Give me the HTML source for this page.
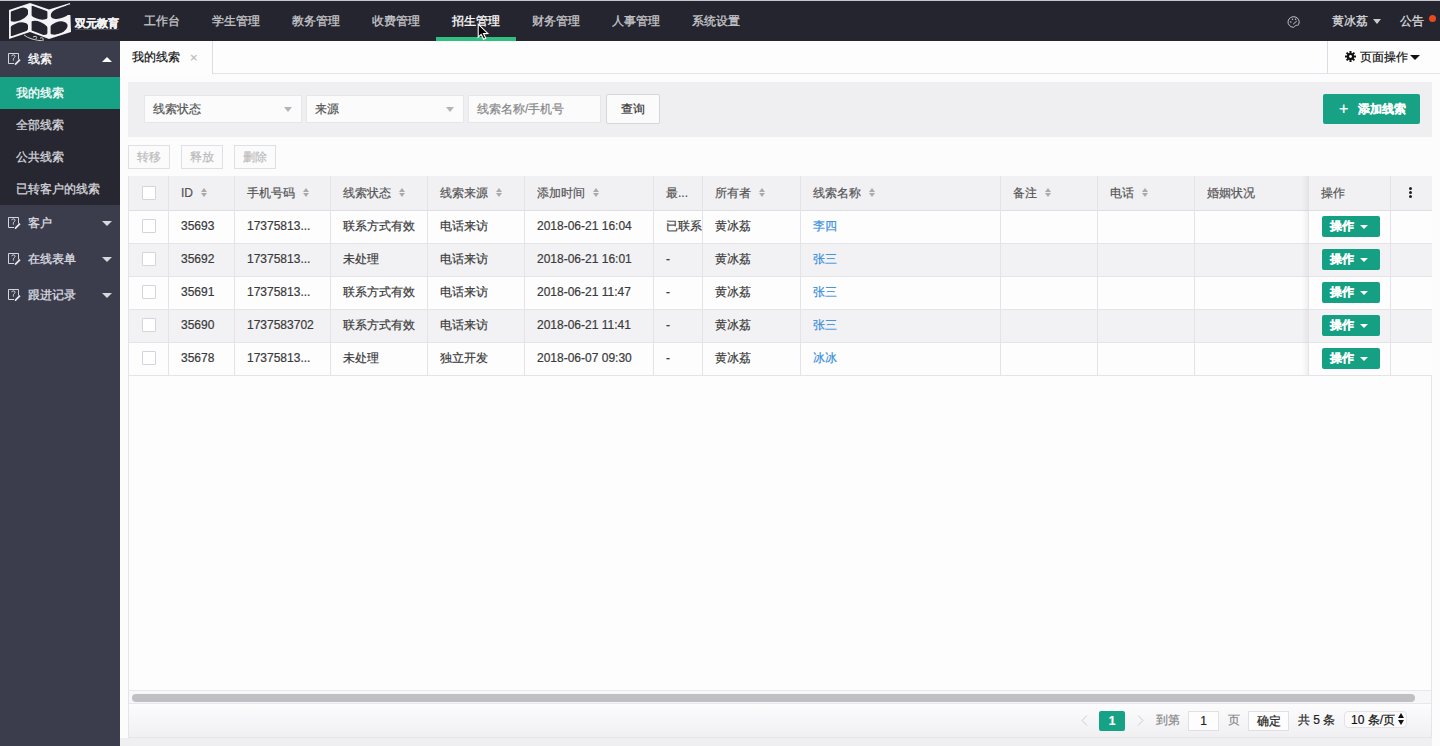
<!DOCTYPE html>
<html><head><meta charset="utf-8">
<style>
*{box-sizing:border-box;margin:0;padding:0}
html,body{width:1440px;height:746px;overflow:hidden;background:#fcfcfd;font-family:"Liberation Sans",sans-serif;font-size:12px;color:#333;-webkit-text-stroke:0.2px currentColor}
#top{position:absolute;left:0;top:0;width:1440px;height:41px;background:#24252e;border-top:1px solid #c6c6cc}
.nav{position:absolute;top:0;height:40px;line-height:40px;color:#c8c8cc;font-size:12px;white-space:nowrap;-webkit-text-stroke:0.3px currentColor}
#side{position:absolute;left:0;top:41px;width:120px;height:705px;background:#3b3d4c}
.sh{position:absolute;left:0;width:120px;height:36px;line-height:36px;color:#fff;font-size:12px;padding-left:28px;-webkit-text-stroke:0.3px currentColor}
.sh .ic{position:absolute;left:7px;top:11px}
.sh .car{position:absolute;left:102px;top:16px;width:0;height:0;border-left:5px solid transparent;border-right:5px solid transparent;border-top:5px solid #d8d8de}
.sh .car.up{border-top:0;border-bottom:5px solid #fff}
.si{position:absolute;left:0;width:120px;height:32px;line-height:32px;color:#d5d5da;font-size:12px;padding-left:16px;background:#262731;-webkit-text-stroke:0.3px currentColor}
#tabs{position:absolute;left:120px;top:41px;width:1320px;height:33px;background:#fdfdfe;border-bottom:1px solid #e2e2e8}
.tab{position:absolute;left:0;top:0;width:93px;height:33px;background:#fdfdfe;border-right:1px solid #dcdce2;line-height:33px;padding-left:12px;color:#111}
.tab .x{position:absolute;left:70px;top:0;color:#bbb;font-size:13px}
.pgop{position:absolute;left:1207px;top:0;width:113px;height:32px;border-left:1px solid #dcdce2;line-height:32px;color:#111}
#filter{position:absolute;left:128px;top:82px;width:1304px;height:55px;background:#efeff2}
.sel{position:absolute;top:13px;height:28px;background:#fbfbfc;border:1px solid #e6e6ea;line-height:26px;padding-left:8px;color:#555}
.sel .c{position:absolute;right:9px;top:11px;border-left:4.5px solid transparent;border-right:4.5px solid transparent;border-top:5px solid #b4b4b8}
.btn{position:absolute;background:#fbfbfc;border:1px solid #d6d6dc;text-align:center;color:#333;border-radius:2px}
.addb{position:absolute;left:1195px;top:12px;width:97px;height:30px;background:#17a286;border-radius:2px;color:#fff;font-weight:bold;line-height:30px;font-size:12px}
.abtn{position:absolute;top:145px;height:24px;width:42px;border:1px solid #e0e0e4;color:#bbb;line-height:22px;text-align:center;background:#fbfbfc}
#tbox{position:absolute;left:128px;top:176px;width:1304px;height:562px;border:1px solid #e4e4ea;background:#fdfdfe}
.thead{position:absolute;left:128px;width:1304px;background:#f1f1f4;border-bottom:1px solid #dedee4}
.tr{position:absolute;left:128px;width:1304px;border-bottom:1px solid #e3e3e8}
.th,.td{position:absolute;border-left:1px solid #e3e3e8;padding-left:12px;white-space:nowrap;overflow:hidden}
.th{line-height:35px;color:#555}
.td{line-height:30px;color:#3a3a3a}
.cb{position:absolute;left:13px;width:14px;height:14px;border:1px solid #d4d4da;background:#fff;border-radius:1px}
.sort{display:inline-block;position:relative;width:8px;height:10px;margin-left:8px;vertical-align:-1px}
.sort b{position:absolute;left:0;border-left:3.5px solid transparent;border-right:3.5px solid transparent}
.sort .u{top:0;border-bottom:4px solid #aaa}
.sort .d{top:5px;border-top:4px solid #aaa}
.lk{color:#3b8fdc}
.opb{position:absolute;left:13px;top:5px;width:58px;height:21px;background:#15a084;border-radius:2px;color:#fff;font-weight:bold;line-height:21px;padding-left:8px}
.opb b{position:absolute;left:38px;top:9px;border-left:4px solid transparent;border-right:4px solid transparent;border-top:4px solid #fff}
.dots{position:absolute;left:18px;top:11px;width:3px}
.dots i{display:block;width:3px;height:3px;background:#222;border-radius:50%;margin-bottom:1px}
#scroll{position:absolute;left:129px;top:690px;width:1302px;height:14px;background:#f7f7f9;border-top:1px solid #e8e8ec;border-bottom:1px solid #e8e8ec}
#thumb{position:absolute;left:3px;top:3px;width:1283px;height:8px;background:#c0c0c4;border-radius:4px}
#pag{position:absolute;left:129px;top:704px;width:1302px;height:33px;background:linear-gradient(#fcfcfd,#f0f0f3)}
#bot{position:absolute;left:120px;top:738px;width:1312px;height:8px;background:#efeff2}
</style></head><body>
<div id="top">
  <svg style="position:absolute;left:0;top:-1px" width="130" height="42" viewBox="0 0 130 42">
    <defs>
      <clipPath id="pl"><polygon points="10.8,11.6 28,5.6 28,30.6 10.8,36.6"/></clipPath>
      <clipPath id="pm"><polygon points="31.6,5.6 47.4,11.2 47.4,36.6 31.6,30.6"/></clipPath>
      <clipPath id="pr"><polygon points="50.6,11.2 69,4.6 72,4.6 72,15 69,15.8 69,30.6 50.6,36.6"/></clipPath>
    </defs>
    <polygon points="9,10 30,3 49,9.5 70,3 71,32 49,39 30,32 9,39" fill="#f4f4f6"/>
    <g fill="#24252e">
      <g clip-path="url(#pl)"><ellipse cx="18" cy="14.5" rx="11" ry="6.3" transform="rotate(-22 18 14.5)"/><ellipse cx="18" cy="29.5" rx="11" ry="6.3" transform="rotate(-22 18 29.5)"/></g>
      <g clip-path="url(#pm)"><ellipse cx="38.5" cy="12.5" rx="11" ry="6.3" transform="rotate(22 38.5 12.5)"/><ellipse cx="38.5" cy="28" rx="11" ry="6.3" transform="rotate(22 38.5 28)"/></g>
      <g clip-path="url(#pr)"><ellipse cx="61" cy="12.5" rx="11" ry="5.5" transform="rotate(-22 61 12.5)"/><ellipse cx="58" cy="28" rx="10" ry="6" transform="rotate(-22 58 28)"/><rect x="66" y="4" width="6" height="11"/></g>
    </g>
    <path d="M24 35 Q30 40 44 41 M33 37 Q38 35 36 39 M40 38 Q44 37 43 40" stroke="#ddd" stroke-width="0.9" fill="none"/>
    <text x="75" y="27" font-size="11" font-weight="bold" fill="#f2f2f2" stroke="#f2f2f2" stroke-width="0.35" font-family="Liberation Sans">双元教育</text>
    <rect x="75" y="29" width="44" height="1" fill="#4a4b55"/>
  </svg>
  <div class="nav" style="left:144px">工作台</div>
  <div class="nav" style="left:212px">学生管理</div>
  <div class="nav" style="left:292px">教务管理</div>
  <div class="nav" style="left:372px">收费管理</div>
  <div class="nav" style="left:452px;color:#fff">招生管理</div>
  <div style="position:absolute;left:436px;top:36px;width:80px;height:4px;background:#2fbf7f"></div>
  <div class="nav" style="left:532px">财务管理</div>
  <div class="nav" style="left:612px">人事管理</div>
  <div class="nav" style="left:692px">系统设置</div>
  <svg style="position:absolute;left:1287px;top:15px" width="14" height="12" viewBox="0 0 14 12"><path d="M11.8 8 A5.6 5.3 0 1 0 6.5 11.3 C8 11.3 7.6 9.3 9.3 9.3 C10.8 9.3 11.8 9.2 11.8 8 Z" stroke="#c4c4c8" stroke-width="1" fill="none"/><circle cx="3.8" cy="6" r="0.8" fill="#c4c4c8"/><circle cx="5.5" cy="3.3" r="0.8" fill="#c4c4c8"/><circle cx="8.6" cy="3.3" r="0.8" fill="#c4c4c8"/><path d="M6.2 8.2 L9.8 5" stroke="#c4c4c8" stroke-width="1"/></svg>
  <div class="nav" style="left:1332px;color:#d8d8dc">黄冰荔</div>
  <div style="position:absolute;left:1373px;top:18px;border-left:4.5px solid transparent;border-right:4.5px solid transparent;border-top:5px solid #ccc"></div>
  <div class="nav" style="left:1400px;color:#d8d8dc">公告</div>
  <div style="position:absolute;left:1429px;top:14px;width:7px;height:7px;border-radius:50%;background:#e84a1f"></div>
<svg style="position:absolute;left:477px;top:22px" width="14" height="18" viewBox="0 0 14 18"><path d="M1.2 1.2 L1.2 14.2 L4.2 11.4 L6.6 16.2 L8.8 15.2 L6.5 10.6 L10.8 10.4 Z" fill="#000" stroke="#fff" stroke-width="1.1" stroke-linejoin="miter"/></svg>
</div>
<div id="side">
  <div class="sh" style="top:0"><svg class="ic" width="15" height="14" viewBox="0 0 15 14"><path d="M1.5 1.5 H11.5 V7.5 M1.5 1.5 V11.5 H7" stroke="#d4d4dc" stroke-width="1" fill="none"/><path d="M4.6 4.2 Q4.9 2.9 6.4 2.9 Q8 2.9 8 4.3 Q8 5.3 6.9 5.9 Q6.4 6.3 6.4 7.2 V8.6" stroke="#d4d4dc" stroke-width="1" fill="none"/><path d="M8 12.6 L13 7.6" stroke="#e8e8ee" stroke-width="1.8"/></svg>线索<span class="car up"></span></div>
  <div class="si" style="top:36px;background:#17a286;color:#fff">我的线索</div>
  <div class="si" style="top:68px">全部线索</div>
  <div class="si" style="top:100px">公共线索</div>
  <div class="si" style="top:132px">已转客户的线索</div>
  <div class="sh" style="top:164px;color:#dcdce0"><svg class="ic" width="15" height="14" viewBox="0 0 15 14"><path d="M1.5 1.5 H11.5 V7.5 M1.5 1.5 V11.5 H7" stroke="#d4d4dc" stroke-width="1" fill="none"/><path d="M4.6 4.2 Q4.9 2.9 6.4 2.9 Q8 2.9 8 4.3 Q8 5.3 6.9 5.9 Q6.4 6.3 6.4 7.2 V8.6" stroke="#d4d4dc" stroke-width="1" fill="none"/><path d="M8 12.6 L13 7.6" stroke="#e8e8ee" stroke-width="1.8"/></svg>客户<span class="car"></span></div>
  <div class="sh" style="top:200px;color:#dcdce0"><svg class="ic" width="15" height="14" viewBox="0 0 15 14"><path d="M1.5 1.5 H11.5 V7.5 M1.5 1.5 V11.5 H7" stroke="#d4d4dc" stroke-width="1" fill="none"/><path d="M4.6 4.2 Q4.9 2.9 6.4 2.9 Q8 2.9 8 4.3 Q8 5.3 6.9 5.9 Q6.4 6.3 6.4 7.2 V8.6" stroke="#d4d4dc" stroke-width="1" fill="none"/><path d="M8 12.6 L13 7.6" stroke="#e8e8ee" stroke-width="1.8"/></svg>在线表单<span class="car"></span></div>
  <div class="sh" style="top:236px;color:#dcdce0"><svg class="ic" width="15" height="14" viewBox="0 0 15 14"><path d="M1.5 1.5 H11.5 V7.5 M1.5 1.5 V11.5 H7" stroke="#d4d4dc" stroke-width="1" fill="none"/><path d="M4.6 4.2 Q4.9 2.9 6.4 2.9 Q8 2.9 8 4.3 Q8 5.3 6.9 5.9 Q6.4 6.3 6.4 7.2 V8.6" stroke="#d4d4dc" stroke-width="1" fill="none"/><path d="M8 12.6 L13 7.6" stroke="#e8e8ee" stroke-width="1.8"/></svg>跟进记录<span class="car"></span></div>
</div>
<div id="tabs">
  <div class="tab">我的线索<span class="x">×</span></div>
  <div class="pgop"><svg style="position:absolute;left:17px;top:10px" width="11" height="11" viewBox="0 0 11 11"><circle cx="5.5" cy="5.5" r="3.6" fill="#111"/><g fill="#111"><rect x="4.5" y="0" width="2" height="11"/><rect x="0" y="4.5" width="11" height="2"/><rect x="4.5" y="0" width="2" height="11" transform="rotate(45 5.5 5.5)"/><rect x="4.5" y="0" width="2" height="11" transform="rotate(-45 5.5 5.5)"/></g><circle cx="5.5" cy="5.5" r="1.4" fill="#fff"/></svg><span style="position:absolute;left:32px">页面操作</span><span style="position:absolute;left:82px;top:14px;border-left:5px solid transparent;border-right:5px solid transparent;border-top:5px solid #111"></span></div>
</div>
<div id="filter">
  <div class="sel" style="left:16px;width:158px">线索状态<span class="c"></span></div>
  <div class="sel" style="left:178px;width:158px">来源<span class="c"></span></div>
  <div class="sel" style="left:340px;width:133px;color:#888">线索名称/手机号</div>
  <div class="btn" style="left:478px;top:12px;width:54px;height:30px;line-height:28px">查询</div>
  <div class="addb"><span style="position:absolute;left:16px;font-size:16px;font-weight:normal">+</span><span style="position:absolute;left:35px">添加线索</span></div>
</div>
<div class="abtn" style="left:128px">转移</div>
<div class="abtn" style="left:181px">释放</div>
<div class="abtn" style="left:234px">删除</div>
<div id="tbox"></div>
<div class="thead" style="top:176px;height:35px"></div>
<div class="th" style="left:128px;top:176px;width:40px;height:35px"><span class="cb" style="top:10px"></span></div>
<div class="th" style="left:168px;top:176px;width:66px;height:35px">ID<span class="sort"><b class="u"></b><b class="d"></b></span></div>
<div class="th" style="left:234px;top:176px;width:96px;height:35px">手机号码<span class="sort"><b class="u"></b><b class="d"></b></span></div>
<div class="th" style="left:330px;top:176px;width:97px;height:35px">线索状态<span class="sort"><b class="u"></b><b class="d"></b></span></div>
<div class="th" style="left:427px;top:176px;width:97px;height:35px">线索来源<span class="sort"><b class="u"></b><b class="d"></b></span></div>
<div class="th" style="left:524px;top:176px;width:129px;height:35px">添加时间<span class="sort"><b class="u"></b><b class="d"></b></span></div>
<div class="th" style="left:653px;top:176px;width:49px;height:35px">最...</div>
<div class="th" style="left:702px;top:176px;width:98px;height:35px">所有者<span class="sort"><b class="u"></b><b class="d"></b></span></div>
<div class="th" style="left:800px;top:176px;width:200px;height:35px">线索名称<span class="sort"><b class="u"></b><b class="d"></b></span></div>
<div class="th" style="left:1000px;top:176px;width:97px;height:35px">备注<span class="sort"><b class="u"></b><b class="d"></b></span></div>
<div class="th" style="left:1097px;top:176px;width:97px;height:35px">电话<span class="sort"><b class="u"></b><b class="d"></b></span></div>
<div class="th" style="left:1194px;top:176px;width:114px;height:35px">婚姻状况</div>
<div class="th" style="left:1308px;top:176px;width:82px;height:35px">操作</div>
<div class="th" style="left:1390px;top:176px;width:42px;height:35px"><span class="dots"><i></i><i></i><i></i></span></div>
<div class="tr" style="top:211px;height:33px;background:#fdfdfe"></div>
<div class="td" style="left:128px;top:211px;width:40px;height:33px"><span class="cb" style="top:8px"></span></div>
<div class="td" style="left:168px;top:211px;width:66px;height:33px">35693</div>
<div class="td" style="left:234px;top:211px;width:96px;height:33px">17375813...</div>
<div class="td" style="left:330px;top:211px;width:97px;height:33px">联系方式有效</div>
<div class="td" style="left:427px;top:211px;width:97px;height:33px">电话来访</div>
<div class="td" style="left:524px;top:211px;width:129px;height:33px">2018-06-21 16:04</div>
<div class="td" style="left:653px;top:211px;width:49px;height:33px">已联系</div>
<div class="td" style="left:702px;top:211px;width:98px;height:33px">黄冰荔</div>
<div class="td" style="left:800px;top:211px;width:200px;height:33px"><span class="lk">李四</span></div>
<div class="td" style="left:1000px;top:211px;width:97px;height:33px"></div>
<div class="td" style="left:1097px;top:211px;width:97px;height:33px"></div>
<div class="td" style="left:1194px;top:211px;width:114px;height:33px"></div>
<div class="td" style="left:1308px;top:211px;width:82px;height:33px"><span class="opb">操作<b></b></span></div>
<div class="td" style="left:1390px;top:211px;width:42px;height:33px"></div>
<div class="tr" style="top:244px;height:33px;background:#f2f2f4"></div>
<div class="td" style="left:128px;top:244px;width:40px;height:33px"><span class="cb" style="top:8px"></span></div>
<div class="td" style="left:168px;top:244px;width:66px;height:33px">35692</div>
<div class="td" style="left:234px;top:244px;width:96px;height:33px">17375813...</div>
<div class="td" style="left:330px;top:244px;width:97px;height:33px">未处理</div>
<div class="td" style="left:427px;top:244px;width:97px;height:33px">电话来访</div>
<div class="td" style="left:524px;top:244px;width:129px;height:33px">2018-06-21 16:01</div>
<div class="td" style="left:653px;top:244px;width:49px;height:33px">-</div>
<div class="td" style="left:702px;top:244px;width:98px;height:33px">黄冰荔</div>
<div class="td" style="left:800px;top:244px;width:200px;height:33px"><span class="lk">张三</span></div>
<div class="td" style="left:1000px;top:244px;width:97px;height:33px"></div>
<div class="td" style="left:1097px;top:244px;width:97px;height:33px"></div>
<div class="td" style="left:1194px;top:244px;width:114px;height:33px"></div>
<div class="td" style="left:1308px;top:244px;width:82px;height:33px"><span class="opb">操作<b></b></span></div>
<div class="td" style="left:1390px;top:244px;width:42px;height:33px"></div>
<div class="tr" style="top:277px;height:33px;background:#fdfdfe"></div>
<div class="td" style="left:128px;top:277px;width:40px;height:33px"><span class="cb" style="top:8px"></span></div>
<div class="td" style="left:168px;top:277px;width:66px;height:33px">35691</div>
<div class="td" style="left:234px;top:277px;width:96px;height:33px">17375813...</div>
<div class="td" style="left:330px;top:277px;width:97px;height:33px">联系方式有效</div>
<div class="td" style="left:427px;top:277px;width:97px;height:33px">电话来访</div>
<div class="td" style="left:524px;top:277px;width:129px;height:33px">2018-06-21 11:47</div>
<div class="td" style="left:653px;top:277px;width:49px;height:33px">-</div>
<div class="td" style="left:702px;top:277px;width:98px;height:33px">黄冰荔</div>
<div class="td" style="left:800px;top:277px;width:200px;height:33px"><span class="lk">张三</span></div>
<div class="td" style="left:1000px;top:277px;width:97px;height:33px"></div>
<div class="td" style="left:1097px;top:277px;width:97px;height:33px"></div>
<div class="td" style="left:1194px;top:277px;width:114px;height:33px"></div>
<div class="td" style="left:1308px;top:277px;width:82px;height:33px"><span class="opb">操作<b></b></span></div>
<div class="td" style="left:1390px;top:277px;width:42px;height:33px"></div>
<div class="tr" style="top:310px;height:33px;background:#f2f2f4"></div>
<div class="td" style="left:128px;top:310px;width:40px;height:33px"><span class="cb" style="top:8px"></span></div>
<div class="td" style="left:168px;top:310px;width:66px;height:33px">35690</div>
<div class="td" style="left:234px;top:310px;width:96px;height:33px">1737583702</div>
<div class="td" style="left:330px;top:310px;width:97px;height:33px">联系方式有效</div>
<div class="td" style="left:427px;top:310px;width:97px;height:33px">电话来访</div>
<div class="td" style="left:524px;top:310px;width:129px;height:33px">2018-06-21 11:41</div>
<div class="td" style="left:653px;top:310px;width:49px;height:33px">-</div>
<div class="td" style="left:702px;top:310px;width:98px;height:33px">黄冰荔</div>
<div class="td" style="left:800px;top:310px;width:200px;height:33px"><span class="lk">张三</span></div>
<div class="td" style="left:1000px;top:310px;width:97px;height:33px"></div>
<div class="td" style="left:1097px;top:310px;width:97px;height:33px"></div>
<div class="td" style="left:1194px;top:310px;width:114px;height:33px"></div>
<div class="td" style="left:1308px;top:310px;width:82px;height:33px"><span class="opb">操作<b></b></span></div>
<div class="td" style="left:1390px;top:310px;width:42px;height:33px"></div>
<div class="tr" style="top:343px;height:33px;background:#fdfdfe"></div>
<div class="td" style="left:128px;top:343px;width:40px;height:33px"><span class="cb" style="top:8px"></span></div>
<div class="td" style="left:168px;top:343px;width:66px;height:33px">35678</div>
<div class="td" style="left:234px;top:343px;width:96px;height:33px">17375813...</div>
<div class="td" style="left:330px;top:343px;width:97px;height:33px">未处理</div>
<div class="td" style="left:427px;top:343px;width:97px;height:33px">独立开发</div>
<div class="td" style="left:524px;top:343px;width:129px;height:33px">2018-06-07 09:30</div>
<div class="td" style="left:653px;top:343px;width:49px;height:33px">-</div>
<div class="td" style="left:702px;top:343px;width:98px;height:33px">黄冰荔</div>
<div class="td" style="left:800px;top:343px;width:200px;height:33px"><span class="lk">冰冰</span></div>
<div class="td" style="left:1000px;top:343px;width:97px;height:33px"></div>
<div class="td" style="left:1097px;top:343px;width:97px;height:33px"></div>
<div class="td" style="left:1194px;top:343px;width:114px;height:33px"></div>
<div class="td" style="left:1308px;top:343px;width:82px;height:33px"><span class="opb">操作<b></b></span></div>
<div class="td" style="left:1390px;top:343px;width:42px;height:33px"></div><div id="fixshadow" style="position:absolute;left:1302px;top:176px;width:6px;height:199px;background:linear-gradient(to right,rgba(0,0,0,0),rgba(0,0,0,0.05))"></div>
<div id="scroll"><div id="thumb"></div></div>
<div id="pag">
  <svg style="position:absolute;left:952px;top:11px" width="7" height="11" viewBox="0 0 7 11"><path d="M6 0.5 L1 5.5 L6 10.5" stroke="#ccc" stroke-width="1" fill="none"/></svg>
  <span style="position:absolute;left:970px;top:7px;width:26px;height:20px;background:#17a286;border-radius:2px;color:#fff;font-weight:bold;text-align:center;line-height:20px">1</span>
  <svg style="position:absolute;left:1008px;top:11px" width="7" height="11" viewBox="0 0 7 11"><path d="M1 0.5 L6 5.5 L1 10.5" stroke="#ccc" stroke-width="1" fill="none"/></svg>
  <span style="position:absolute;left:1027px;top:0;line-height:33px;color:#888">到第</span>
  <span style="position:absolute;left:1059px;top:7px;width:31px;height:20px;border:1px solid #e0e0e4;background:#fdfdfe;text-align:center;line-height:18px;color:#222">1</span>
  <span style="position:absolute;left:1099px;top:0;line-height:33px;color:#888">页</span>
  <span style="position:absolute;left:1119px;top:7px;width:41px;height:20px;border:1px solid #e0e0e4;background:#fdfdfe;text-align:center;line-height:18px;color:#222">确定</span>
  <span style="position:absolute;left:1169px;top:0;line-height:33px;color:#222">共 5 条</span>
  <span style="position:absolute;left:1215px;top:7px;width:63px;height:17px;border:1px solid #e4e4e8;border-radius:4px;background:#fafafb;line-height:16px;padding-left:6px;color:#111">10 条/页<span style="position:absolute;left:53px;top:1px;border-left:3px solid transparent;border-right:3px solid transparent;border-bottom:5px solid #111"></span><span style="position:absolute;left:53px;top:8px;border-left:3px solid transparent;border-right:3px solid transparent;border-top:5px solid #111"></span></span>
</div>
<div id="bot"></div>
</body></html>
